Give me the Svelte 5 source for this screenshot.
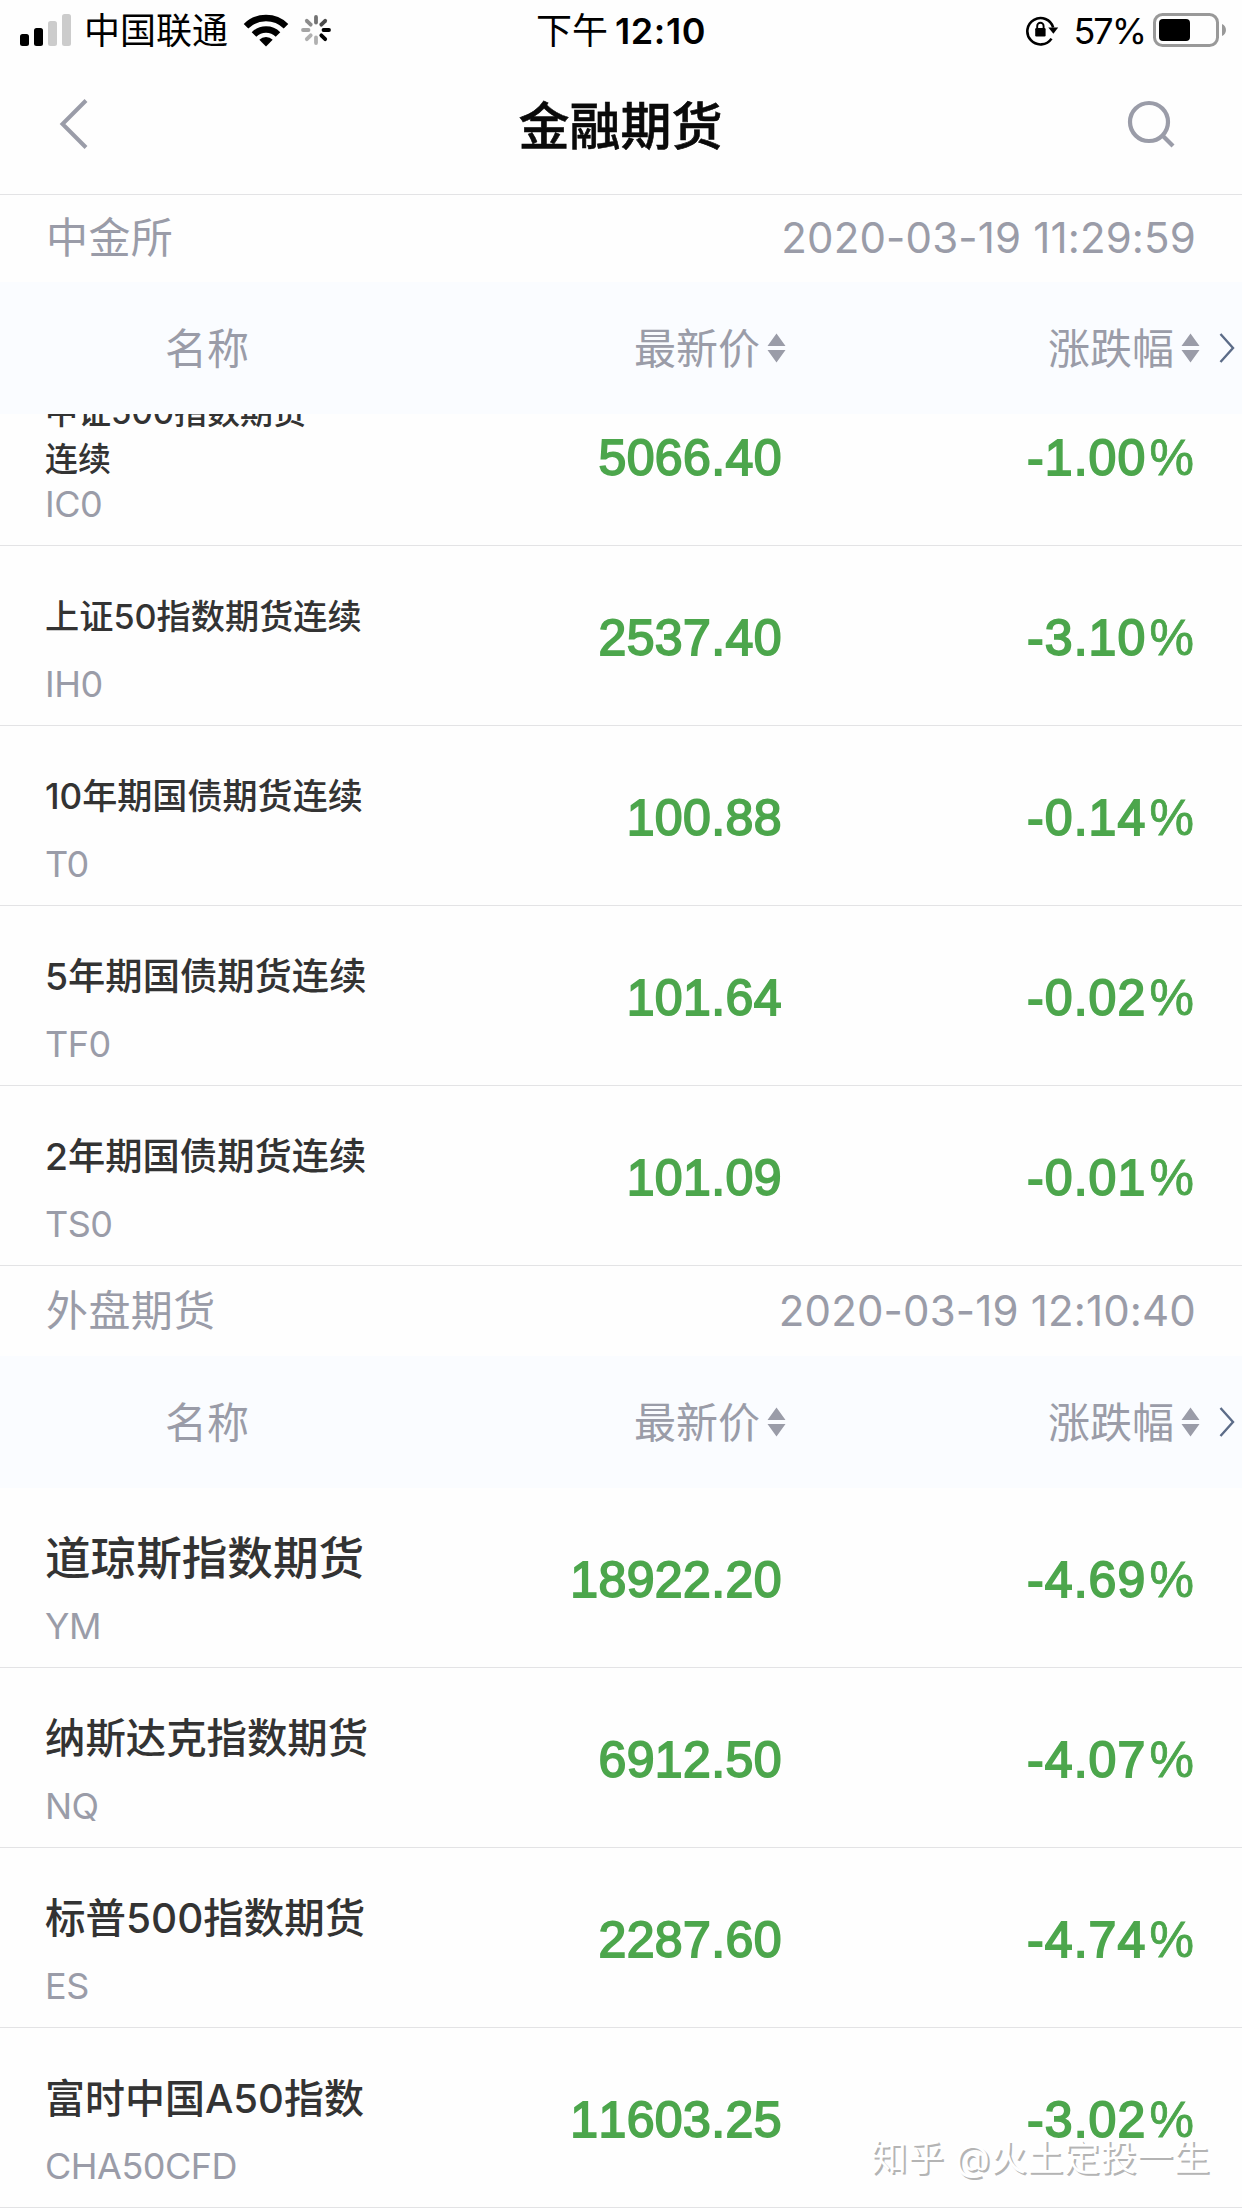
<script lang="ts">
	interface Quote {
		name: string;
		code: string;
		price: string;
		change: string;
		size: number;
	}

	interface Market {
		title: string;
		time: string;
		quotes: Quote[];
	}

	// size: font size of the name after it is shrunk to fit its column
	const markets: Market[] = [
		{
			title: '中金所',
			time: '2020-03-19 11:29:59',
			quotes: [
				{ name: '中证500指数期货\n连续', code: 'IC0', price: '5066.40', change: '-1.00', size: 33 },
				{ name: '上证50指数期货连续', code: 'IH0', price: '2537.40', change: '-3.10', size: 34.2 },
				{ name: '10年期国债期货连续', code: 'T0', price: '100.88', change: '-0.14', size: 35.1 },
				{ name: '5年期国债期货连续', code: 'TF0', price: '101.64', change: '-0.02', size: 37.3 },
				{ name: '2年期国债期货连续', code: 'TS0', price: '101.09', change: '-0.01', size: 37.3 }
			]
		},
		{
			title: '外盘期货',
			time: '2020-03-19 12:10:40',
			quotes: [
				{ name: '道琼斯指数期货', code: 'YM', price: '18922.20', change: '-4.69', size: 45.6 },
				{ name: '纳斯达克指数期货', code: 'NQ', price: '6912.50', change: '-4.07', size: 40.4 },
				{ name: '标普500指数期货', code: 'ES', price: '2287.60', change: '-4.74', size: 40.5 },
				{ name: '富时中国A50指数', code: 'CHA50CFD', price: '11603.25', change: '-3.02', size: 40 }
			]
		}
	];

	const spokes = [0.55, 0.7, 1, 1, 0.3, 0.3, 0.35, 0.45];
</script>

{#snippet sortIcon()}
	<svg class="sort" width="19" height="30" viewBox="0 0 19 30">
		<path d="M9.5 0.5 18.5 13H0.5ZM0.5 17H18.5L9.5 29.5Z" fill="#9a9ca8" />
	</svg>
{/snippet}

<div class="screen">
	<div class="status-bar">
		<div class="status-left">
			<svg width="52" height="34" viewBox="0 0 52 34">
				<rect x="0" y="21" width="9" height="12" rx="2.5" />
				<rect x="14" y="15" width="9" height="18" rx="2.5" />
				<rect x="28" y="8" width="9" height="25" rx="2.5" fill="#ccc" />
				<rect x="42" y="1" width="9" height="32" rx="2.5" fill="#ccc" />
			</svg>
			<span class="carrier">中国联通</span>
			<svg class="wifi" width="46" height="34" viewBox="0 0 46 34">
				<g fill="none" stroke="#000" stroke-width="6.5">
					<path d="M3 13.2A28.5 28.5 0 0 1 43 13.2" />
					<path d="M11 21.5A17 17 0 0 1 35 21.5" />
				</g>
				<path d="M16.3 26.7A9.5 9.5 0 0 1 29.7 26.7L23 33.5Z" />
			</svg>
			<svg class="spinner" width="30" height="30" viewBox="-15 -15 30 30">
				{#each spokes as opacity, i}
					<line
						x1="0"
						y1="-7.5"
						x2="0"
						y2="-13"
						stroke="#000"
						stroke-width="3.8"
						stroke-linecap="round"
						{opacity}
						transform="rotate({i * 45})"
					/>
				{/each}
			</svg>
		</div>
		<div class="clock">下午<span>12:10</span></div>
		<div class="status-right">
			<svg width="34" height="32" viewBox="0 0 34 32">
				<path d="M26.5 24.6A13.2 13.2 0 1 1 28.2 13.5" fill="none" stroke="#000" stroke-width="2.6" />
				<path d="M23.3 13.4H33.2L28.4 19.8Z" />
				<rect x="10.2" y="14" width="10.4" height="8.5" rx="1.2" />
				<path d="M12.2 14.5V11.9a3.2 3.2 0 0 1 6.4 0V14.5" fill="none" stroke="#000" stroke-width="1.9" />
			</svg>
			<span class="percent">57%</span>
			<svg width="74" height="34" viewBox="0 0 74 34">
				<rect x="1.5" y="1.5" width="63" height="31" rx="8" fill="none" stroke="#999" stroke-width="3" />
				<rect x="6" y="6" width="31" height="22" rx="4" />
				<path d="M69 11c5.3 2 5.3 10 0 12Z" fill="#999" />
			</svg>
		</div>
	</div>

	<header class="nav">
		<button class="icon-btn" aria-label="返回">
			<svg width="30" height="52" viewBox="0 0 30 52">
				<path d="M27 2.5 3.5 26 27 49.5" fill="none" stroke="#9a9ca8" stroke-width="4" />
			</svg>
		</button>
		<h1>金融期货</h1>
		<button class="icon-btn search" aria-label="搜索">
			<svg width="48" height="48" viewBox="0 0 48 48">
				<circle cx="22" cy="22" r="19" fill="none" stroke="#9a9ca8" stroke-width="4.2" />
				<path d="M35.5 35.5 46 46" stroke="#9a9ca8" stroke-width="4.2" />
			</svg>
		</button>
	</header>

	{#each markets as market, m}
		<section>
			<div class="market-bar" class:pinned={m === 0}>
				<span>{market.title}</span>
				<span class="time">{market.time}</span>
			</div>
			<div class="columns table-head">
				<span class="head-name">名称</span>
				<span class="head-cell"><span>最新价</span>{@render sortIcon()}</span>
				<span class="head-cell"><span>涨跌幅</span>{@render sortIcon()}</span>
				<svg class="more" width="16" height="32" viewBox="0 0 16 32">
					<path d="M1.5 2 14 16 1.5 30" fill="none" stroke="#5c6c88" stroke-width="2.4" />
				</svg>
			</div>
			<div class="quotes" class:scrolled={m === 0}>
				{#each market.quotes as quote}
					<div class="columns quote">
						<div class="title">
							<div class="name" style="font-size: {quote.size}px"><span>{quote.name}</span></div>
							<div class="code">{quote.code}</div>
						</div>
						<div class="price">{quote.price}</div>
						<div class="change">{quote.change}<span>%</span></div>
					</div>
				{/each}
			</div>
		</section>
	{/each}

	<div class="watermark">知乎 @火土定投一生</div>
</div>

<style>
	:global(body) {
		background: #fefefe;
	}

	.screen {
		position: relative;
		width: 1242px;
		height: 2208px;
		overflow: hidden;
		font-family: Inter, 'Noto Sans CJK SC', sans-serif;
		color: #333;
	}

	svg {
		display: block;
		flex: none;
	}

	.status-bar {
		display: grid;
		grid-template-columns: 1fr auto 1fr;
		align-items: center;
		height: 60px;
		padding: 0 15px 0 20px;
		color: #000;
		font-size: 36px;
		line-height: 60px;
	}

	.status-left,
	.status-right {
		display: flex;
		align-items: center;
	}

	.status-right {
		justify-content: flex-end;
	}

	.carrier {
		margin-left: 12px;
		padding-top: 3px;
		line-height: 57px;
	}

	.wifi {
		margin-left: 15px;
	}

	.spinner {
		margin-left: 12px;
	}

	.clock {
		padding: 3px 5px 0 0;
		line-height: 57px;
	}

	.clock span {
		margin-left: 7px;
		font-weight: 600;
		letter-spacing: 0.6px;
	}

	.percent {
		margin: 0 8px 0 14px;
		padding-top: 3px;
		line-height: 57px;
		letter-spacing: -2px;
	}

	.nav {
		display: grid;
		grid-template-columns: 1fr auto 1fr;
		align-items: center;
		box-sizing: border-box;
		height: 135px;
		padding: 0 67px 6px 59px;
		border-bottom: 1px solid #e3e3e5;
	}

	h1 {
		margin: 0;
		padding: 0 0 2px 7px;
		color: #0a0a0a;
		font-size: 51px;
		font-weight: 500;
		-webkit-text-stroke: 0.6px #0a0a0a;
	}

	.icon-btn {
		justify-self: start;
		padding: 0;
		border: none;
		background: none;
	}

	.search {
		justify-self: end;
	}

	.market-bar {
		display: flex;
		align-items: center;
		justify-content: space-between;
		height: 90px;
		padding: 0 46px;
		color: #9a9ca8;
		font-size: 42px;
		line-height: 90px;
		letter-spacing: 0.4px;
	}

	.market-bar.pinned {
		height: 87px;
		line-height: 84px;
	}

	.market-bar.pinned span {
		padding-bottom: 2px;
	}

	.time {
		letter-spacing: 0.15px;
	}

	.columns {
		display: grid;
		grid-template-columns: 414px 372px 414px 42px;
	}

	.table-head {
		align-items: center;
		height: 132px;
		background: #fafcff;
		color: #9a9ca8;
		font-size: 42px;
	}

	.head-name {
		padding-bottom: 5px;
		text-align: center;
	}

	.head-cell {
		display: flex;
		align-items: center;
		justify-content: flex-end;
	}

	.head-cell span {
		padding-bottom: 5px;
	}

	.sort {
		margin-left: 7px;
	}

	.more {
		margin-left: 19px;
	}

	.quotes.scrolled {
		display: flex;
		flex-direction: column;
		justify-content: flex-end;
		height: 852px;
		overflow: hidden;
	}

	.quote {
		flex: none;
		box-sizing: border-box;
		height: 180px;
		border-bottom: 1px solid #e3e3e5;
	}

	.title {
		padding: 22px 20px 0 45px;
	}

	.name {
		display: flex;
		align-items: center;
		height: 96px;
		font-weight: 500;
		line-height: 47px;
		white-space: pre-line;
	}

	.code {
		color: #9a9ca8;
		font-size: 36px;
		line-height: 40px;
		letter-spacing: -0.5px;
	}

	.price,
	.change {
		padding-top: 6px;
		color: #4ca64c;
		font-family: 'Liberation Sans', sans-serif;
		font-size: 50px;
		font-kerning: none;
		line-height: 173px;
		text-align: right;
		-webkit-text-stroke: 1.8px #4ca64c;
	}

	.price {
		padding-right: 4px;
		letter-spacing: 0.4px;
	}

	.change {
		padding-right: 5px;
		letter-spacing: 1.1px;
	}

	.change span {
		margin-left: 3px;
		-webkit-text-stroke-width: 0.8px;
	}

	.watermark {
		position: absolute;
		right: 32px;
		bottom: 23px;
		color: #fff;
		font-size: 36px;
		line-height: 54px;
		letter-spacing: 0.6px;
		text-shadow: 2px 2px 0 #b4b4b4;
	}
</style>
